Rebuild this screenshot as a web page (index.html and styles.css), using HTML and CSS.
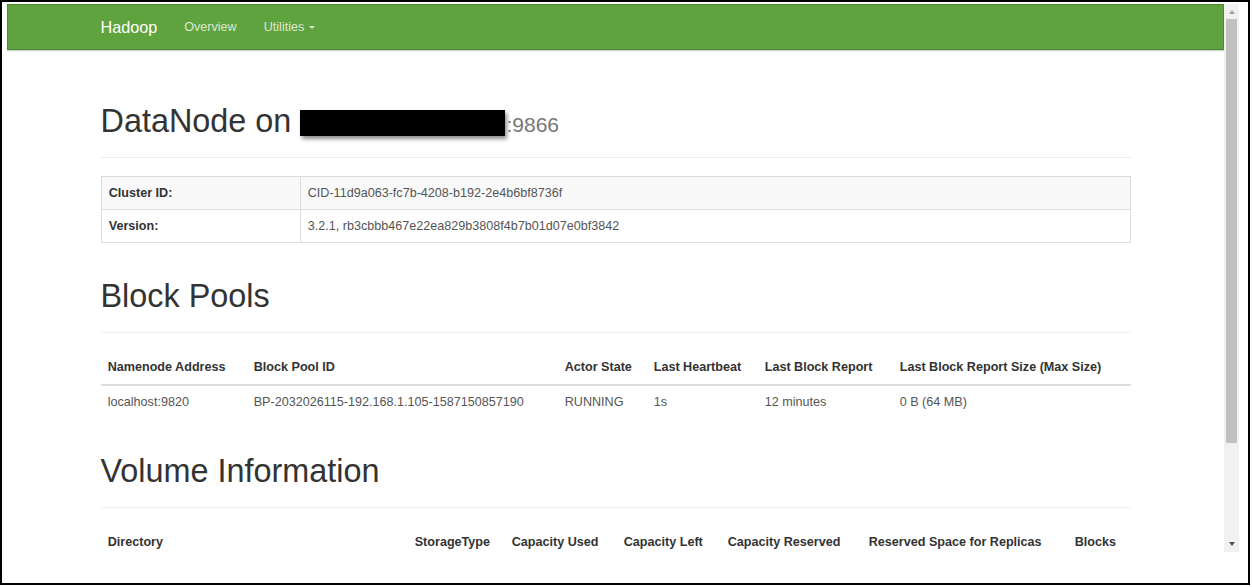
FILE: index.html
```html
<!DOCTYPE html>
<html lang="en">
<head>
<meta charset="utf-8">
<title>DataNode Information</title>
<link rel="stylesheet" href="styles.css">
</head>
<body>
<div class="frame">
  <div class="window">
    <div class="page">
      <header class="navbar">
        <div class="container navbar-inner">
          <span class="brand">Hadoop</span>
          <ul class="nav">
            <li>Overview</li>
            <li>Utilities <span class="caret"></span></li>
          </ul>
        </div>
      </header>
      <main class="container content">
        <div class="page-header">
          <h1>DataNode on <span class="redacted"></span><small>:9866</small></h1>
        </div>
        <table class="table bordered striped">
          <colgroup><col class="c-label"><col></colgroup>
          <tbody>
            <tr><th>Cluster ID:</th><td>CID-11d9a063-fc7b-4208-b192-2e4b6bf8736f</td></tr>
            <tr><th>Version:</th><td>3.2.1, rb3cbbb467e22ea829b3808f4b7b01d07e0bf3842</td></tr>
          </tbody>
        </table>

        <div class="page-header"><h1>Block Pools</h1></div>
        <table class="table list">
          <colgroup>
            <col class="p1"><col class="p2"><col class="p3"><col class="p4"><col class="p5"><col>
          </colgroup>
          <thead>
            <tr>
              <th>Namenode Address</th>
              <th>Block Pool ID</th>
              <th>Actor State</th>
              <th>Last Heartbeat</th>
              <th>Last Block Report</th>
              <th>Last Block Report Size (Max Size)</th>
            </tr>
          </thead>
          <tbody>
            <tr>
              <td>localhost:9820</td>
              <td>BP-2032026115-192.168.1.105-1587150857190</td>
              <td>RUNNING</td>
              <td>1s</td>
              <td>12 minutes</td>
              <td>0 B (64 MB)</td>
            </tr>
          </tbody>
        </table>

        <div class="page-header"><h1>Volume Information</h1></div>
        <table class="table list">
          <colgroup>
            <col class="v1"><col class="v2"><col class="v3"><col class="v4"><col class="v5"><col class="v6"><col>
          </colgroup>
          <thead>
            <tr>
              <th>Directory</th>
              <th>StorageType</th>
              <th>Capacity Used</th>
              <th>Capacity Left</th>
              <th>Capacity Reserved</th>
              <th>Reserved Space for Replicas</th>
              <th>Blocks</th>
            </tr>
          </thead>
        </table>
      </main>
    </div>
    <div class="scrollbar">
      <span class="arrow up"></span>
      <span class="thumb"></span>
      <span class="track-fill"></span>
      <span class="arrow down"></span>
    </div>
  </div>
</div>
</body>
</html>
```

FILE: styles.css
```css
* { box-sizing: border-box; }

html, body {
  margin: 0;
  padding: 0;
  background: #fff;
}

body {
  font-family: "Liberation Sans", Arial, Helvetica, sans-serif;
  font-size: 12.6px;
  line-height: 1.42857;
  color: #333;
}

.frame {
  width: 1250px;
  height: 585px;
  border: 2px solid #000;
  padding: 2px 0 0 5px;
  background: #fff;
}

.window {
  width: 1232px;
  height: 548px;
  display: flex;
  overflow: hidden;
}

.page {
  flex: 1;
  min-width: 0;
  overflow: hidden;
}

/* navbar */
.navbar {
  height: 46px;
  background: #5fa33e;
  border: 1px solid #4b8a2e;
  box-shadow: 0 1px 1px rgba(0, 0, 0, 0.18);
}

.container {
  width: 1030px;
  margin: 0 auto;
}

.navbar-inner {
  height: 100%;
  display: flex;
  align-items: center;
}

.brand {
  font-size: 16.2px;
  line-height: 18px;
  color: #fff;
  padding-right: 13.5px;
  margin-top: -1px;
}

.nav {
  list-style: none;
  margin: 0;
  padding: 0;
  display: flex;
}

.nav li {
  padding: 0 13.5px;
  font-size: 12.6px;
  line-height: 18px;
  color: #dbe8d3;
  white-space: nowrap;
}

.caret {
  display: inline-block;
  width: 0;
  height: 0;
  margin-left: 1px;
  vertical-align: middle;
  border-top: 3.6px solid #dbe8d3;
  border-left: 3.6px solid transparent;
  border-right: 3.6px solid transparent;
}

/* content */
.content {
  padding-top: 18px;
}

.page-header {
  margin: 36px 0 18px;
  padding-bottom: 8.1px;
  border-bottom: 1px solid #eee;
}

.page-header h1 {
  margin: 0 0 9px;
  font-size: 32.4px;
  font-weight: normal;
  line-height: 1.1;
  color: #333;
  white-space: nowrap;
}

.page-header h1 small {
  font-size: 65%;
  color: #777;
  font-weight: normal;
}

.redacted {
  display: inline-block;
  width: 205px;
  height: 26px;
  background: #000;
  vertical-align: -4px;
  margin-right: 1px;
  box-shadow: 2px 3px 4px rgba(0, 0, 0, 0.45);
}

.table {
  width: 100%;
  border-collapse: collapse;
  table-layout: fixed;
}

.table th,
.table td {
  padding: 7.2px;
  line-height: 18px;
  text-align: left;
  vertical-align: top;
  white-space: nowrap;
}

.table th {
  font-weight: bold;
  color: #333;
}

.table td {
  color: #555;
}

.bordered {
  border: 1px solid #ddd;
}

.bordered th,
.bordered td {
  border: 1px solid #ddd;
}

.striped tbody tr:nth-child(odd) {
  background: #f9f9f9;
}

.c-label { width: 199px; }

.list thead th {
  border-bottom: 2px solid #ddd;
}

.list tbody td {
  border-top: 1px solid #ddd;
}

.p1 { width: 146px; }
.p2 { width: 311px; }
.p3 { width: 89px; }
.p4 { width: 111px; }
.p5 { width: 135px; }

.v1 { width: 307px; }
.v2 { width: 97px; }
.v3 { width: 112px; }
.v4 { width: 104px; }
.v5 { width: 141px; }
.v6 { width: 206px; }

/* fake scrollbar */
.scrollbar {
  width: 15px;
  height: 100%;
  background: #f1f1f1;
  display: flex;
  flex-direction: column;
  align-items: center;
}

.arrow {
  width: 0;
  height: 0;
  border-left: 3.5px solid transparent;
  border-right: 3.5px solid transparent;
}

.arrow.up {
  margin-top: 6px;
  border-bottom: 4px solid #a3a3a3;
}

.thumb {
  margin-top: 5px;
  width: 11px;
  height: 424px;
  background: #c1c1c1;
}

.track-fill {
  flex: 1;
}

.arrow.down {
  margin-bottom: 6px;
  border-top: 4px solid #505050;
}
```
